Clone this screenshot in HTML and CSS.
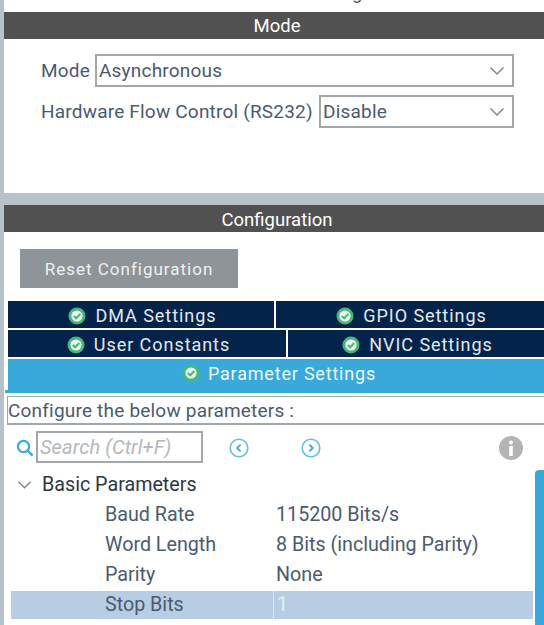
FILE: index.html
```html
<!DOCTYPE html>
<html lang="en">
<head>
<meta charset="utf-8">
<title>USART Mode and Configuration</title>
<link rel="stylesheet" href="styles.css">
</head>
<body>
<svg class="defs" width="0" height="0" aria-hidden="true">
  <symbol id="chev" viewBox="0 0 16 10"><path d="M1.5 1.5 8 8l6.5-6.5" fill="none" stroke="#83888c" stroke-width="1.5"/></symbol>
  <symbol id="ok" viewBox="0 0 18 18"><circle cx="9" cy="9" r="8.5" fill="#45b97c"/><circle cx="9" cy="9" r="5.6" fill="#eef7f1"/><path d="M5.8 9 8.2 11.3 12.3 7" fill="none" stroke="#45b97c" stroke-width="2"/></symbol>
</svg>
<main class="page">
  <div class="clip"><p class="clip-title">USART2 Mode and Configuration</p></div>
  <section class="mode">
    <h2 class="bar">Mode</h2>
    <div class="mode-body">
      <div class="field">
        <label class="field-label">Mode</label>
        <div class="select select-wide"><span>Asynchronous</span><svg class="chev"><use href="#chev"/></svg></div>
      </div>
      <div class="field">
        <label class="field-label">Hardware Flow Control (RS232)</label>
        <div class="select select-narrow"><span>Disable</span><svg class="chev"><use href="#chev"/></svg></div>
      </div>
    </div>
  </section>
  <section class="config">
    <h2 class="bar bar-config">Configuration</h2>
    <button class="reset">Reset Configuration</button>
    <div class="tabs">
      <div class="tab-row">
        <div class="tab tab-dma"><svg class="ok"><use href="#ok"/></svg>DMA Settings</div>
        <div class="tab tab-fill"><svg class="ok"><use href="#ok"/></svg>GPIO Settings</div>
      </div>
      <div class="tab-row">
        <div class="tab tab-user"><svg class="ok"><use href="#ok"/></svg>User Constants</div>
        <div class="tab tab-fill"><svg class="ok"><use href="#ok"/></svg>NVIC Settings</div>
      </div>
      <div class="tab tab-active"><svg class="ok"><use href="#ok"/></svg>Parameter Settings</div>
    </div>
    <div class="hint">Configure the below parameters :</div>
    <div class="tools">
      <svg class="search-icon" viewBox="0 0 18 18"><circle cx="7.5" cy="7.5" r="5.6" fill="none" stroke="#39a9dc" stroke-width="2.2"/><path d="m11.6 11.6 5 5" stroke="#39a9dc" stroke-width="2.4"/></svg>
      <div class="search">Search (Ctrl+F)</div>
      <svg class="nav nav-prev" viewBox="0 0 20 20"><circle cx="10" cy="10" r="8.8" fill="none" stroke="#5cbde8" stroke-width="1.6"/><path d="M11.6 6.6 8.2 10l3.4 3.4" fill="none" stroke="#39a9dc" stroke-width="1.8"/></svg>
      <svg class="nav nav-next" viewBox="0 0 20 20"><circle cx="10" cy="10" r="8.8" fill="none" stroke="#5cbde8" stroke-width="1.6"/><path d="M8.4 6.6 11.8 10l-3.4 3.4" fill="none" stroke="#39a9dc" stroke-width="1.8"/></svg>
      <svg class="info" viewBox="0 0 24 24"><circle cx="12" cy="12" r="12" fill="#b4b4b4"/><circle cx="12" cy="6.4" r="2" fill="#fff"/><rect x="10.2" y="10" width="3.6" height="10" fill="#fff"/></svg>
    </div>
    <div class="tree-wrap">
      <div class="tree">
        <div class="group"><svg class="group-chev"><use href="#chev"/></svg>Basic Parameters</div>
        <div class="row"><span class="key">Baud Rate</span><span class="val">115200 Bits/s</span></div>
        <div class="row"><span class="key">Word Length</span><span class="val">8 Bits (including Parity)</span></div>
        <div class="row"><span class="key">Parity</span><span class="val">None</span></div>
        <div class="row row-selected"><span class="key">Stop Bits</span><span class="val">1</span></div>
      </div>
      <div class="scrollbar"></div>
    </div>
  </section>
</main>
</body>
</html>
```
FILE: styles.css
```css
* { box-sizing: border-box; }
html, body { margin: 0; height: 100%; }
body { overflow: hidden; background: #fff; font-family: Roboto, "Liberation Sans", sans-serif; color: #4a5a70; }
.defs { position: absolute; }
.page { height: 625px; background: #b5c2c9; padding-left: 4px; overflow: hidden; }
.clip { height: 12px; background: #fff; overflow: hidden; position: relative; }
.clip-title { margin: -17px 0 0; padding-left: 22px; height: 21px; font-size: 18.5px; line-height: 21px; text-align: center; color: #555; white-space: nowrap; }
.bar { margin: 0; height: 27px; background: #515151; color: #fff; font-size: 18.5px; font-weight: 400; line-height: 29px; text-align: center; padding-left: 6px; }
.bar-config { line-height: 31px; }
.mode { background: #fff; height: 181px; margin-bottom: 12px; }
.mode-body { padding: 15px 30px 0 37px; display: flex; flex-direction: column; gap: 8px; }
.field { display: flex; align-items: center; justify-content: space-between; font-size: 19px; letter-spacing: .2px; }
.field-label { white-space: nowrap; }
.select { height: 33px; border: 2px solid #a2a7ab; display: flex; align-items: center; justify-content: space-between; padding: 0 7px 0 2px; }
.select-wide { width: 419px; }
.select-narrow { width: 195px; }
.chev { width: 16px; height: 10px; }
.config { background: #fff; height: 420px; }
.reset { display: block; margin: 17px 0 13px 16px; width: 218px; height: 39px; background: #8f9499; border: 0; color: #eef0f1; font: 400 17px Roboto, "Liberation Sans", sans-serif; letter-spacing: 1px; }
.tabs { margin-left: 4px; display: flex; flex-direction: column; gap: 2px; position: relative; }
.tabs::after { content: ""; position: absolute; left: -3px; bottom: 0; width: 3px; height: 3px; background: #39a9dc; }
.tab-row { display: flex; gap: 2px; height: 27px; }
.tab { display: flex; align-items: center; justify-content: center; gap: 9px; padding: 2px 0 0 3px; background: #03234b; color: #e4e8ec; font-size: 18px; letter-spacing: .95px; white-space: nowrap; }
.tab-dma { width: 266px; }
.tab-user { width: 278px; }
.tab-fill { flex: 1; }
.tab-active { height: 34px; padding: 0 0 6px 6px; gap: 8px; background: #39a9dc; color: #eef8fc; letter-spacing: .8px; }
.ok { width: 18px; height: 18px; flex: none; }
.hint { margin: 3px 0 0 3px; height: 29px; border: 1px solid #a2a7ab; border-width: 1px 0 2px 1px; padding-left: 0; font-size: 19px; line-height: 28px; letter-spacing: .2px; color: #4a5a70; white-space: nowrap; }
.tools { display: flex; align-items: center; height: 32px; margin-top: 6px; padding-left: 12px; }
.search-icon { width: 18px; height: 18px; flex: none; margin: 2px 2px 0 0; }
.search { width: 167px; height: 32px; border: 2px solid #a2a7ab; padding-left: 2px; font-size: 20px; line-height: 29px; font-style: italic; letter-spacing: .1px; color: #b4b8bb; white-space: nowrap; }
.nav { width: 20px; height: 20px; flex: none; margin-top: 2px; }
.nav-prev { margin-left: 26px; }
.nav-next { margin-left: 52px; }
.info { width: 24px; height: 24px; flex: none; margin: 2px 0 0 178px; }
.tree-wrap { display: flex; justify-content: space-between; height: 162px; margin-top: 7px; }
.tree { width: 522px; margin-left: 7px; }
.group { height: 30px; display: flex; align-items: center; padding: 0 0 1px 6px; gap: 10px; font-size: 19.7px; color: #2d3648; }
.group-chev { width: 15px; height: 10px; }
.row { height: 30px; display: flex; align-items: center; font-size: 19.7px; color: #4a5a70; padding-bottom: 1px; }
.key { width: 262px; padding-left: 94px; flex: none; white-space: nowrap; }
.val { flex: 1; padding-left: 3px; white-space: nowrap; }
.row-selected { height: 28px; background: #b7cde3; margin-top: 1px; }
.row-selected .val { color: #e6eef6; border-left: 1px solid #d9e5f0; height: 28px; line-height: 28px; }
.scrollbar { width: 9px; background: #39a9dc; border-top-left-radius: 4px; flex: none; }
```
